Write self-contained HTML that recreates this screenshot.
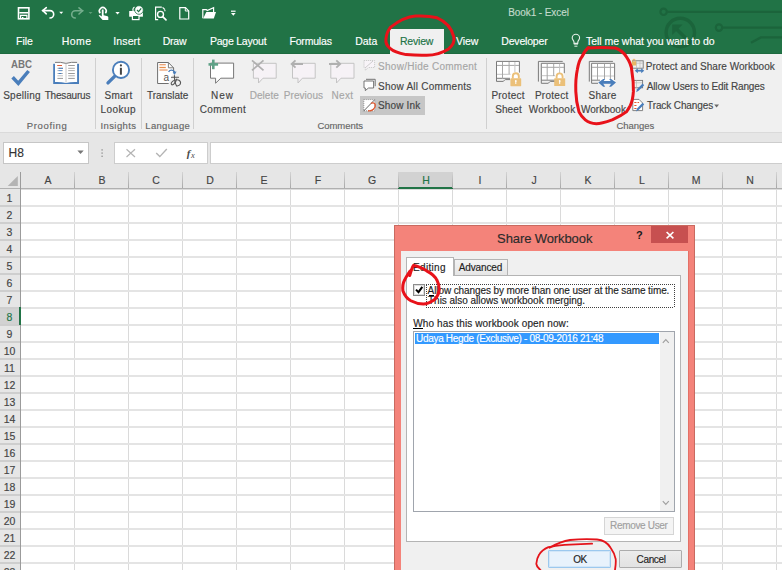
<!DOCTYPE html>
<html><head><meta charset="utf-8"><style>
html,body{margin:0;padding:0;width:782px;height:570px;overflow:hidden;background:#fff;position:relative}
*{box-sizing:border-box}
.tx{position:absolute;white-space:nowrap;font-family:"Liberation Sans",sans-serif;-webkit-text-stroke:0.15px currentColor}
.hd{font-size:10.5px;line-height:11px}
.abs{position:absolute}
svg{position:absolute;overflow:visible}
</style></head><body>

<div class="abs" style="left:0;top:0;width:782px;height:54px;background:#217346"></div>
<div class="abs" style="left:0;top:53px;width:782px;height:1px;background:#1d6a3f"></div>
<!-- circuit decoration -->
<svg style="left:0;top:0" width="782" height="54">
 <g stroke="#1b643b" fill="none" stroke-width="2.2">
  <circle cx="663.6" cy="11.8" r="3.2"/>
  <line x1="666.8" y1="11.8" x2="782" y2="11.8"/>
  <circle cx="719" cy="27.6" r="3.2"/>
  <line x1="722.2" y1="27.6" x2="782" y2="27.6"/>
  <circle cx="680.3" cy="32.5" r="14.2" stroke-width="3.4"/>
  <path d="M751 42.7 L760.8 37.4 L782 37.4" stroke-width="2.4"/>
  <path d="M676 28.5 L686.5 39" stroke-width="3.6"/>
  <path d="M672.2 24.6 L672.2 35 L682.6 24.6 Z" fill="#1b643b" stroke="none"/>
 </g>
</svg>
<!-- QAT -->
<svg style="left:0;top:0" width="250" height="26">
 <rect x="18.5" y="7.8" width="10.4" height="11" fill="none" stroke="#fff" stroke-width="1.6"/>
 <rect x="19.3" y="12" width="8.8" height="1.5" fill="#fff"/>
 <path d="M20.6 19 V15.4 H26.9 V19" fill="none" stroke="#fff" stroke-width="1.2"/>
 <rect x="22" y="17" width="1.4" height="1.6" fill="#fff"/>
 <g fill="none" stroke="#fff" stroke-width="1.6" stroke-linecap="round">
  <path d="M42.5 10.6 H50 A3.7 3.7 0 0 1 50 18"/>
  <path d="M46.3 7.6 L42.8 10.6 L46.3 13.8"/>
 </g>
 <path d="M59.2 11.8 H63.2 L61.2 14 Z" fill="#fff"/>
 <g fill="none" stroke="#74ad8c" stroke-width="1.6" stroke-linecap="round">
  <path d="M82.8 10.8 H75.3 A3.6 3.6 0 0 0 75.3 18"/>
  <path d="M79 7.8 L82.5 10.8 L79 14"/>
 </g>
 <path d="M88.6 12 H92.5 L90.55 14 Z" fill="#5f9d78"/>
 <path d="M100.2 13.2 A3.4 3.4 0 1 1 105.4 13.2" fill="none" stroke="#fff" stroke-width="1.6"/>
 <path d="M101.8 9.4 H103.6 V15.2 L107.6 16.2 L108.3 17 V19.9 H102.6 L98.6 15.6 L99.6 14.9 L101.8 16.4 Z" fill="#fff"/>
 <path d="M115.4 11.9 H119.7 L117.55 14.4 Z" fill="#fff"/>
 <!-- quick print -->
 <path d="M129.2 11 h13.7 v5.7 h-13.7 z" fill="#fff"/>
 <rect x="132.4" y="15.4" width="6.6" height="4.2" fill="#217346" stroke="#fff" stroke-width="1.2"/>
 <path d="M134 12 A3 3 0 0 1 134.5 7" fill="none" stroke="#fff" stroke-width="1.2"/>
 <circle cx="139" cy="10" r="4.3" fill="#fff" stroke="#217346" stroke-width="0.8"/>
 <path d="M137 10 L138.6 11.6 L141.2 8.3" fill="none" stroke="#217346" stroke-width="1.2"/>
 <!-- print preview -->
 <path d="M158.2 19.6 H155.6 V7.1 H161.8" fill="none" stroke="#fff" stroke-width="1.2"/>
 <path d="M162.6 7.3 L164.8 9.5" fill="none" stroke="#fff" stroke-width="1.1"/>
 <path d="M164.9 9.8 V11.2" fill="none" stroke="#fff" stroke-width="1.1"/>
 <circle cx="160.5" cy="14.4" r="3" fill="none" stroke="#fff" stroke-width="1.4"/>
 <path d="M162.7 16.6 L166 19.8" stroke="#fff" stroke-width="1.7" stroke-linecap="round"/>
 <!-- new -->
 <path d="M179.8 7.7 H185.5 L188.7 10.9 V19 H179.8 Z" fill="none" stroke="#fff" stroke-width="1.2"/>
 <path d="M185.3 7.7 V11 H188.7" fill="none" stroke="#fff" stroke-width="1"/>
 <!-- open -->
 <path d="M202.8 18.3 V9.6 H206.3 L207.2 10.5 L213.6 7.6 V12" fill="none" stroke="#fff" stroke-width="1.2"/>
 <path d="M203.2 18.6 L206.3 12 H216 L213.8 18.6 Z" fill="#fff"/>
 <!-- customize -->
 <rect x="231" y="10.6" width="4.6" height="1.2" fill="#fff"/>
 <path d="M231 13 H235.6 L233.3 15.8 Z" fill="#fff"/>
</svg>
<!-- review tab -->
<div class="abs" style="left:390px;top:29px;width:54px;height:26px;background:#f0f0f0"></div>
<!-- lightbulb -->
<svg style="left:0;top:0" width="782" height="54">
 <path d="M574 43.2 V42.2 C574 40.6 572.2 39.6 572.2 38 A3.7 3.7 0 0 1 579.6 38 C579.6 39.6 577.8 40.6 577.8 42.2 V43.2 Z" fill="none" stroke="#e6f0ea" stroke-width="1.1"/>
 <rect x="573.8" y="43" width="4.2" height="1.6" fill="#e6f0ea"/>
 <line x1="574.4" y1="46.2" x2="577.4" y2="46.2" stroke="#e6f0ea" stroke-width="1"/>
</svg>

<div class="abs" style="left:0;top:54px;width:782px;height:78px;background:#f0f0f0"></div>
<div class="abs" style="left:390px;top:54px;width:54px;height:1px;background:#f0f0f0"></div>
<!-- separators -->
<div class="abs" style="left:95px;top:58px;width:1px;height:71px;background:#d0d0d0"></div>
<div class="abs" style="left:141px;top:58px;width:1px;height:71px;background:#d0d0d0"></div>
<div class="abs" style="left:193px;top:58px;width:1px;height:71px;background:#d0d0d0"></div>
<div class="abs" style="left:486px;top:58px;width:1px;height:71px;background:#d0d0d0"></div>
<!-- show ink highlight -->
<div class="abs" style="left:360px;top:96px;width:65px;height:19px;background:#c6c6c6"></div>
<svg style="left:0;top:0" width="782" height="134">
 <!-- ABC -->
 <text x="11" y="67.9" font-family="Liberation Sans" font-weight="bold" font-size="10" fill="#777" textLength="21" lengthAdjust="spacingAndGlyphs">ABC</text>
 <path d="M12.6 77.3 L18.3 83.4 L28.6 71" fill="none" stroke="#4a7ebb" stroke-width="3.5"/>
 <!-- thesaurus -->
 <rect x="53.2" y="63.8" width="25.8" height="20.2" fill="#4a7ebb"/>
 <path d="M55 62.2 Q60.5 61.8 66 63.4 Q71.5 61.8 77.1 62.2 V82 Q71.5 81.6 66 83 Q60.5 81.6 55 82 Z" fill="#fff"/>
 <path d="M55 62.4 Q60.5 61.8 66 63.4 Q71.5 61.8 77.1 62.4" fill="none" stroke="#6a6a6a" stroke-width="0.9"/>
 <line x1="66" y1="63.4" x2="66" y2="82.6" stroke="#c8c8c8" stroke-width="1"/>
 <g stroke-width="1">
  <line x1="57.2" y1="65.5" x2="62" y2="65.5" stroke="#e0603a"/>
  <line x1="57.4" y1="68.3" x2="63" y2="68.3" stroke="#bbb"/>
  <line x1="58.6" y1="68.3" x2="63" y2="68.3" stroke="#4a7ebb"/>
  <line x1="57.4" y1="70.6" x2="63" y2="70.6" stroke="#bbb"/>
  <line x1="58.6" y1="70.6" x2="62" y2="70.6" stroke="#6b9bd2"/>
  <line x1="57.4" y1="73.5" x2="63" y2="73.5" stroke="#bbb"/>
  <line x1="58.6" y1="73.5" x2="61.5" y2="73.5" stroke="#4a7ebb"/>
  <line x1="57.4" y1="75.8" x2="63" y2="75.8" stroke="#c4c4c4"/>
  <line x1="57.4" y1="78.4" x2="63" y2="78.4" stroke="#9a9a9a"/>
  <line x1="68.2" y1="65.5" x2="74.8" y2="65.5" stroke="#9a9a9a"/>
  <line x1="68.2" y1="68.3" x2="74.8" y2="68.3" stroke="#a8a8a8"/>
  <line x1="68.2" y1="70.6" x2="74.8" y2="70.6" stroke="#b0b0b0"/>
  <line x1="68.2" y1="73.5" x2="74.8" y2="73.5" stroke="#9a9a9a"/>
  <line x1="68.2" y1="75.8" x2="74.8" y2="75.8" stroke="#b0b0b0"/>
  <line x1="68.2" y1="78.4" x2="74.8" y2="78.4" stroke="#9a9a9a"/>
 </g>
 <!-- smart lookup -->
 <line x1="108" y1="82.9" x2="114.6" y2="76.4" stroke="#4a7ebb" stroke-width="3.4" stroke-linecap="round"/>
 <circle cx="121" cy="69.9" r="8.1" fill="#fff" stroke="#4a7ebb" stroke-width="1.9"/>
 <circle cx="120.9" cy="65.4" r="1.1" fill="#444"/>
 <rect x="119.9" y="67.8" width="2" height="6.9" fill="#444"/>
 <!-- translate -->
 <path d="M168.7 83.5 H157.6 V62.5 H168.4 L173.6 67.9 V72" fill="#fff" stroke="#6f6f6f" stroke-width="1"/>
 <path d="M168.4 62.5 V67.8 H173.6" fill="none" stroke="#6f6f6f" stroke-width="0.9"/>
 <g stroke="#e8904c" stroke-width="1.3">
  <line x1="159.4" y1="64.7" x2="165.8" y2="64.7" stroke="#eba070"/>
  <line x1="159.4" y1="67.5" x2="165.8" y2="67.5"/>
  <line x1="159.4" y1="70" x2="167.6" y2="70" stroke="#eba070"/>
 </g>
 <path d="M168.6 71.8 C170 69.6 173.4 69.4 175 72.4" fill="none" stroke="#4a7ebb" stroke-width="1.4"/>
 <path d="M172.6 72.2 L176.6 71.6 L174.6 75 Z" fill="#4a7ebb"/>
 <text x="163.6" y="81.3" font-family="Liberation Sans" font-size="10" fill="#555" textLength="5.6" lengthAdjust="spacingAndGlyphs">a</text>
 <g fill="none" stroke="#555" stroke-width="1.1" stroke-linecap="round">
  <path d="M171.5 77.2 H178.5"/>
  <path d="M174.4 75.6 C174.4 79 174.8 83 176.6 86"/>
  <path d="M176.8 79 C175.4 83 172.6 86 171.4 84.4 C170.2 82.6 173.6 79.6 177.2 79.8 C180.2 80 181.2 82.4 180.2 84.2 C179.6 85.2 178.4 85.8 177.2 86"/>
 </g>
 <!-- new comment -->
 <path d="M210.5 63.1 H233.6 V78.2 H220.8 L215.6 83.2 V78.2 H210.5 Z" fill="#fff" stroke="#777" stroke-width="1" stroke-linejoin="round"/>
 <rect x="212" y="59.6" width="2.6" height="9.6" fill="#5fa187"/>
 <rect x="208.5" y="63.1" width="9.6" height="2.6" fill="#5fa187"/>
 <!-- delete -->
 <path d="M253.4 63.3 H276.2 V78.2 H263 L258.5 83 V78.2 H253.4 Z" fill="#f6f2f6" stroke="#c4c4c4" stroke-width="1" stroke-linejoin="round"/>
 <path d="M252 60.4 L263.5 70.4 M263.5 60.4 L252 70.4" stroke="#b0b0b0" stroke-width="1.8"/>
 <!-- previous -->
 <path d="M292.5 63.3 H315.2 V78.2 H302.4 L298 83 V78.2 H292.5 Z" fill="#f6f2f6" stroke="#c4c4c4" stroke-width="1" stroke-linejoin="round"/>
 <path d="M303 64 H291.8 M295.5 60.3 L291.6 64 L295.5 67.7" fill="none" stroke="#b0b0b0" stroke-width="1.8"/>
 <!-- next -->
 <path d="M330.8 63.3 H354 V78.2 H341 L336.5 83 V78.2 H330.8 Z" fill="#f6f2f6" stroke="#c4c4c4" stroke-width="1" stroke-linejoin="round"/>
 <path d="M329 64 H340 M336.3 60.3 L340.2 64 L336.3 67.7" fill="none" stroke="#b0b0b0" stroke-width="1.8"/>
 <!-- show/hide -->
 <path d="M364 60.5 H374.6 V67.5 H368.5 L365.3 70.3 V67.5 H364 Z" fill="#f8f4f8" stroke="#c8c8c8" stroke-width="0.9" stroke-dasharray="1.2 0.8"/>
 <path d="M365 68 L373 61" stroke="#c8c8c8" stroke-width="0.9"/>
 <!-- show all -->
 <path d="M366 79.3 H375.2 V86.2" fill="none" stroke="#666" stroke-width="0.9"/>
 <path d="M364 81 H373.6 V88 H368.5 L365.3 90.6 V88 H364 Z" fill="#fff" stroke="#666" stroke-width="0.9"/>
 <!-- show ink -->
 <path d="M363.8 99.6 H374.8 V110.8 H363.8 Z" fill="#fff" stroke="#888" stroke-width="0.8" stroke-dasharray="1 1"/>
 <path d="M363.5 111.2 L374.6 99.8" stroke="#555" stroke-width="0.9"/>
 <path d="M368 110.8 C372 111.5 376 108 375.2 104.6 C374.6 102.5 372 102.5 371 103.5" fill="none" stroke="#e0592f" stroke-width="1.4"/>
 <!-- protect sheet -->
 <path d="M496.5 61.4 H519.4 V79 H496.5 Z" fill="#fff"/>
 <g fill="none" stroke="#7a7a7a" stroke-width="1">
  <path d="M519.4 72.6 V61.4 H496.5 V81.4 H503 C504 81.4 504.5 79.6 505.5 79.6 H510"/>
  <line x1="496.5" y1="78.3" x2="510" y2="78.3"/>
 </g>
 <g stroke="#a6a6a6" stroke-width="1">
  <line x1="497" y1="65.4" x2="519" y2="65.4"/>
  <line x1="497" y1="74.3" x2="510.5" y2="74.3" stroke="#c4c4c4"/>
  <line x1="502.5" y1="62" x2="502.5" y2="79"/>
  <line x1="509.1" y1="62" x2="509.1" y2="74"/>
  <line x1="514.9" y1="62" x2="514.9" y2="72" stroke="#c4c4c4"/>
 </g>
 <path d="M512.8 78.6 V76.3 A3 3 0 0 1 518.8 76.3 V78.6" fill="none" stroke="#ebc079" stroke-width="1.9"/>
 <rect x="510.4" y="78.3" width="10.8" height="7.9" rx="0.6" fill="#ebc079"/>
 <circle cx="515.8" cy="81" r="0.9" fill="#fff"/>
 <rect x="515.3" y="81" width="1" height="3" fill="#fff"/>
 <!-- protect workbook -->
 <path d="M538.4 81.6 V61.4 H562.7" fill="none" stroke="#7a7a7a" stroke-width="1"/>
 <path d="M541.3 63.3 H564.3 V81 H541.3 Z" fill="#fff"/>
 <g fill="none" stroke="#7a7a7a" stroke-width="1">
  <path d="M564.3 73.2 V63.3 H541.3 V83.3 H548 C549 83.3 549.5 81.4 550.5 81.4 H555"/>
  <line x1="541.3" y1="80.2" x2="555" y2="80.2"/>
 </g>
 <g stroke="#a6a6a6" stroke-width="1">
  <line x1="541.8" y1="67.3" x2="564" y2="67.3"/>
  <line x1="541.8" y1="75.7" x2="555" y2="75.7" stroke="#c4c4c4"/>
  <line x1="547.2" y1="63.8" x2="547.2" y2="80"/>
  <line x1="553.7" y1="63.8" x2="553.7" y2="76"/>
  <line x1="559.6" y1="63.8" x2="559.6" y2="73" stroke="#c4c4c4"/>
 </g>
 <path d="M556.6 78.5 V76.4 A3 3 0 0 1 562.6 76.4 V78.5" fill="none" stroke="#ebc079" stroke-width="1.9"/>
 <rect x="554.2" y="78.2" width="11" height="7.9" rx="0.6" fill="#ebc079"/>
 <circle cx="559.7" cy="80.9" r="0.9" fill="#fff"/>
 <rect x="559.2" y="80.9" width="1" height="3" fill="#fff"/>
 <!-- share workbook -->
 <path d="M589.3 81.6 V61.4 H612.9" fill="none" stroke="#7a7a7a" stroke-width="1"/>
 <path d="M591.6 63.3 H614.6 V81 H591.6 Z" fill="#fff"/>
 <g fill="none" stroke="#7a7a7a" stroke-width="1">
  <path d="M614.6 80 V63.3 H591.6 V83.3 H598"/>
  <line x1="591.6" y1="80.2" x2="600" y2="80.2"/>
 </g>
 <g stroke="#a6a6a6" stroke-width="1">
  <line x1="592" y1="67.3" x2="614" y2="67.3"/>
  <line x1="592" y1="76" x2="614" y2="76" stroke="#c8c8c8"/>
  <line x1="597.5" y1="63.8" x2="597.5" y2="80"/>
  <line x1="604.5" y1="63.8" x2="604.5" y2="79"/>
  <line x1="610.4" y1="63.8" x2="610.4" y2="79"/>
 </g>
 <path d="M601 82.4 H613.3" stroke="#4a7ebb" stroke-width="2.8"/>
 <path d="M598.3 82.4 L603.2 78.9 H605.2 L602.4 82.4 L605.2 86.7 H603.2 Z" fill="#4a7ebb"/>
 <path d="M616 82.4 L611.1 78.9 H609.1 L611.9 82.4 L609.1 86.7 H611.1 Z" fill="#4a7ebb"/>
 <!-- small icons changes -->
 <g fill="none" stroke="#777" stroke-width="0.9">
  <rect x="632.6" y="60.8" width="10.6" height="7.4"/>
 </g>
 <g stroke="#bbb" stroke-width="0.7"><line x1="633" y1="63.2" x2="643" y2="63.2"/><line x1="636.5" y1="61" x2="636.5" y2="68"/><line x1="640" y1="61" x2="640" y2="68"/></g>
 <rect x="631.8" y="61.5" width="4.4" height="4" fill="#e8b765"/>
 <path d="M632.8 61.8 V60.4 A1.2 1.2 0 0 1 635.2 60.4 V61.8" fill="none" stroke="#e8b765" stroke-width="1"/>
 <path d="M637 70.7 H642" stroke="#4a7ebb" stroke-width="1.8"/>
 <path d="M634.8 70.7 L637.8 68.2 V73.2 Z M644.2 70.7 L641.2 68.2 V73.2 Z" fill="#4a7ebb"/>
 <g fill="none" stroke="#777" stroke-width="0.9"><rect x="632.6" y="80.4" width="10" height="7.4"/></g>
 <g stroke="#bbb" stroke-width="0.7"><line x1="633" y1="82.8" x2="642" y2="82.8"/><line x1="636.5" y1="80.6" x2="636.5" y2="87.6"/></g>
 <path d="M636.2 92.2 L637 89.2 L642.6 83.6 L644.2 85.2 L638.6 90.8 Z" fill="#4a7ebb"/>
 <path d="M632.8 99.4 H639 L642.6 103 V110.6 H632.8 Z" fill="#fff" stroke="#777" stroke-width="0.9"/>
 <g fill="#e0592f"><rect x="634.3" y="102" width="2.2" height="1"/><rect x="634.3" y="105" width="2.2" height="1"/><rect x="634.3" y="108" width="2.2" height="1"/><rect x="637.5" y="102" width="1.6" height="1"/></g>
 <path d="M636.2 111.4 L637 108.4 L642.6 102.8 L644.2 104.4 L638.6 110 Z" fill="#4a7ebb"/>
 <path d="M714.2 104.4 H719 L716.6 107.4 Z" fill="#6a6a6a"/>
</svg>

<div class="abs" style="left:0;top:132px;width:782px;height:40px;background:#e6e6e6"></div>
<div class="abs" style="left:0;top:132px;width:782px;height:1px;background:#dadada"></div>
<div class="abs" style="left:3px;top:142px;width:86px;height:22px;background:#fff;border:1px solid #c6c6c6"></div>
<svg style="left:0;top:0" width="782" height="172">
 <path d="M77.4 150.4 H83.7 L80.55 154 Z" fill="#777"/>
 <rect x="101.4" y="149.2" width="1.4" height="1.4" fill="#9a9a9a"/>
 <rect x="101.4" y="152.4" width="1.4" height="1.4" fill="#9a9a9a"/>
 <rect x="101.4" y="155.6" width="1.4" height="1.4" fill="#9a9a9a"/>
</svg>
<div class="abs" style="left:114px;top:142px;width:94px;height:22px;background:#fff;border:1px solid #cdcdcd"></div>
<div class="abs" style="left:210px;top:142px;width:580px;height:22px;background:#fff;border:1px solid #cdcdcd"></div>
<svg style="left:0;top:0" width="782" height="172">
 <path d="M126.5 149.2 L135 157 M135 149.2 L126.5 157" stroke="#b4b4b4" stroke-width="1.2"/>
 <path d="M156.2 153 L159.8 156.6 L166.8 149" fill="none" stroke="#b4b4b4" stroke-width="1.4"/>
 <text x="186.8" y="156.8" font-family="Liberation Serif" font-style="italic" font-weight="bold" font-size="11" fill="#4a4a4a">f</text>
 <text x="191" y="157.5" font-family="Liberation Serif" font-style="italic" font-size="8.5" fill="#4a4a4a">x</text>
</svg>

<div style="position:absolute;left:0;top:172px;width:782px;height:17px;background:#e6e6e6"></div>
<div style="position:absolute;left:398px;top:172px;width:54px;height:16px;background:#d2d2d2"></div>
<div style="position:absolute;left:398px;top:187px;width:55px;height:2px;background:#217346"></div>
<div style="position:absolute;left:0;top:188px;width:398px;height:1px;background:#b0b0b0"></div>
<div style="position:absolute;left:453px;top:188px;width:329px;height:1px;background:#b0b0b0"></div>
<div style="position:absolute;left:0;top:189px;width:20px;height:381px;background:#e6e6e6"></div>
<div style="position:absolute;left:0;top:308px;width:19px;height:16px;background:#d2d2d2"></div>
<div style="position:absolute;left:21px;top:189px;width:761px;height:381px;background:#fff"></div>
<div style="position:absolute;left:21px;top:189px;width:761px;height:1px;background:#dcdcdc"></div>
<div style="position:absolute;left:20px;top:172px;width:1px;height:398px;background:#9b9b9b"></div>
<div style="position:absolute;left:74px;top:189px;width:1px;height:381px;background:#dadada"></div>
<div style="position:absolute;left:74px;top:172px;width:1px;height:16px;background:linear-gradient(#d4d4d4,#a8a8a8)"></div>
<div style="position:absolute;left:128px;top:189px;width:1px;height:381px;background:#dadada"></div>
<div style="position:absolute;left:128px;top:172px;width:1px;height:16px;background:linear-gradient(#d4d4d4,#a8a8a8)"></div>
<div style="position:absolute;left:182px;top:189px;width:1px;height:381px;background:#dadada"></div>
<div style="position:absolute;left:182px;top:172px;width:1px;height:16px;background:linear-gradient(#d4d4d4,#a8a8a8)"></div>
<div style="position:absolute;left:236px;top:189px;width:1px;height:381px;background:#dadada"></div>
<div style="position:absolute;left:236px;top:172px;width:1px;height:16px;background:linear-gradient(#d4d4d4,#a8a8a8)"></div>
<div style="position:absolute;left:290px;top:189px;width:1px;height:381px;background:#dadada"></div>
<div style="position:absolute;left:290px;top:172px;width:1px;height:16px;background:linear-gradient(#d4d4d4,#a8a8a8)"></div>
<div style="position:absolute;left:344px;top:189px;width:1px;height:381px;background:#dadada"></div>
<div style="position:absolute;left:344px;top:172px;width:1px;height:16px;background:linear-gradient(#d4d4d4,#a8a8a8)"></div>
<div style="position:absolute;left:398px;top:189px;width:1px;height:381px;background:#dadada"></div>
<div style="position:absolute;left:398px;top:172px;width:1px;height:16px;background:linear-gradient(#d4d4d4,#a8a8a8)"></div>
<div style="position:absolute;left:452px;top:189px;width:1px;height:381px;background:#dadada"></div>
<div style="position:absolute;left:452px;top:172px;width:1px;height:16px;background:linear-gradient(#d4d4d4,#a8a8a8)"></div>
<div style="position:absolute;left:506px;top:189px;width:1px;height:381px;background:#dadada"></div>
<div style="position:absolute;left:506px;top:172px;width:1px;height:16px;background:linear-gradient(#d4d4d4,#a8a8a8)"></div>
<div style="position:absolute;left:560px;top:189px;width:1px;height:381px;background:#dadada"></div>
<div style="position:absolute;left:560px;top:172px;width:1px;height:16px;background:linear-gradient(#d4d4d4,#a8a8a8)"></div>
<div style="position:absolute;left:614px;top:189px;width:1px;height:381px;background:#dadada"></div>
<div style="position:absolute;left:614px;top:172px;width:1px;height:16px;background:linear-gradient(#d4d4d4,#a8a8a8)"></div>
<div style="position:absolute;left:668px;top:189px;width:1px;height:381px;background:#dadada"></div>
<div style="position:absolute;left:668px;top:172px;width:1px;height:16px;background:linear-gradient(#d4d4d4,#a8a8a8)"></div>
<div style="position:absolute;left:722px;top:189px;width:1px;height:381px;background:#dadada"></div>
<div style="position:absolute;left:722px;top:172px;width:1px;height:16px;background:linear-gradient(#d4d4d4,#a8a8a8)"></div>
<div style="position:absolute;left:776px;top:189px;width:1px;height:381px;background:#dadada"></div>
<div style="position:absolute;left:776px;top:172px;width:1px;height:16px;background:linear-gradient(#d4d4d4,#a8a8a8)"></div>
<div style="position:absolute;left:21px;top:205px;width:761px;height:2px;background:#e4e4e4"></div>
<div style="position:absolute;left:0;top:205px;width:20px;height:2px;background:#cecece"></div>
<div style="position:absolute;left:21px;top:222px;width:761px;height:2px;background:#e4e4e4"></div>
<div style="position:absolute;left:0;top:222px;width:20px;height:2px;background:#cecece"></div>
<div style="position:absolute;left:21px;top:239px;width:761px;height:2px;background:#e4e4e4"></div>
<div style="position:absolute;left:0;top:239px;width:20px;height:2px;background:#cecece"></div>
<div style="position:absolute;left:21px;top:256px;width:761px;height:2px;background:#e4e4e4"></div>
<div style="position:absolute;left:0;top:256px;width:20px;height:2px;background:#cecece"></div>
<div style="position:absolute;left:21px;top:273px;width:761px;height:2px;background:#e4e4e4"></div>
<div style="position:absolute;left:0;top:273px;width:20px;height:2px;background:#cecece"></div>
<div style="position:absolute;left:21px;top:290px;width:761px;height:2px;background:#e4e4e4"></div>
<div style="position:absolute;left:0;top:290px;width:20px;height:2px;background:#cecece"></div>
<div style="position:absolute;left:21px;top:307px;width:761px;height:2px;background:#e4e4e4"></div>
<div style="position:absolute;left:0;top:307px;width:20px;height:2px;background:#cecece"></div>
<div style="position:absolute;left:21px;top:324px;width:761px;height:2px;background:#e4e4e4"></div>
<div style="position:absolute;left:0;top:324px;width:20px;height:2px;background:#cecece"></div>
<div style="position:absolute;left:21px;top:341px;width:761px;height:2px;background:#e4e4e4"></div>
<div style="position:absolute;left:0;top:341px;width:20px;height:2px;background:#cecece"></div>
<div style="position:absolute;left:21px;top:358px;width:761px;height:2px;background:#e4e4e4"></div>
<div style="position:absolute;left:0;top:358px;width:20px;height:2px;background:#cecece"></div>
<div style="position:absolute;left:21px;top:375px;width:761px;height:2px;background:#e4e4e4"></div>
<div style="position:absolute;left:0;top:375px;width:20px;height:2px;background:#cecece"></div>
<div style="position:absolute;left:21px;top:392px;width:761px;height:2px;background:#e4e4e4"></div>
<div style="position:absolute;left:0;top:392px;width:20px;height:2px;background:#cecece"></div>
<div style="position:absolute;left:21px;top:409px;width:761px;height:2px;background:#e4e4e4"></div>
<div style="position:absolute;left:0;top:409px;width:20px;height:2px;background:#cecece"></div>
<div style="position:absolute;left:21px;top:426px;width:761px;height:2px;background:#e4e4e4"></div>
<div style="position:absolute;left:0;top:426px;width:20px;height:2px;background:#cecece"></div>
<div style="position:absolute;left:21px;top:443px;width:761px;height:2px;background:#e4e4e4"></div>
<div style="position:absolute;left:0;top:443px;width:20px;height:2px;background:#cecece"></div>
<div style="position:absolute;left:21px;top:460px;width:761px;height:2px;background:#e4e4e4"></div>
<div style="position:absolute;left:0;top:460px;width:20px;height:2px;background:#cecece"></div>
<div style="position:absolute;left:21px;top:477px;width:761px;height:2px;background:#e4e4e4"></div>
<div style="position:absolute;left:0;top:477px;width:20px;height:2px;background:#cecece"></div>
<div style="position:absolute;left:21px;top:494px;width:761px;height:2px;background:#e4e4e4"></div>
<div style="position:absolute;left:0;top:494px;width:20px;height:2px;background:#cecece"></div>
<div style="position:absolute;left:21px;top:511px;width:761px;height:2px;background:#e4e4e4"></div>
<div style="position:absolute;left:0;top:511px;width:20px;height:2px;background:#cecece"></div>
<div style="position:absolute;left:21px;top:528px;width:761px;height:2px;background:#e4e4e4"></div>
<div style="position:absolute;left:0;top:528px;width:20px;height:2px;background:#cecece"></div>
<div style="position:absolute;left:21px;top:545px;width:761px;height:2px;background:#e4e4e4"></div>
<div style="position:absolute;left:0;top:545px;width:20px;height:2px;background:#cecece"></div>
<div style="position:absolute;left:21px;top:562px;width:761px;height:2px;background:#e4e4e4"></div>
<div style="position:absolute;left:0;top:562px;width:20px;height:2px;background:#cecece"></div>
<div style="position:absolute;left:21px;top:579px;width:761px;height:2px;background:#e4e4e4"></div>
<div style="position:absolute;left:0;top:579px;width:20px;height:2px;background:#cecece"></div>
<div style="position:absolute;left:19px;top:307px;width:2px;height:18px;background:#217346"></div>
<svg style="position:absolute;left:0;top:172px" width="20" height="17"><path d="M17.8 4 L17.8 14 L7.7 14 Z" fill="#b4b4b4"/></svg>
<div class="tx hd" style="left:21px;top:175px;width:54px;text-align:center;color:#444">A</div>
<div class="tx hd" style="left:75px;top:175px;width:54px;text-align:center;color:#444">B</div>
<div class="tx hd" style="left:129px;top:175px;width:54px;text-align:center;color:#444">C</div>
<div class="tx hd" style="left:183px;top:175px;width:54px;text-align:center;color:#444">D</div>
<div class="tx hd" style="left:237px;top:175px;width:54px;text-align:center;color:#444">E</div>
<div class="tx hd" style="left:291px;top:175px;width:54px;text-align:center;color:#444">F</div>
<div class="tx hd" style="left:345px;top:175px;width:54px;text-align:center;color:#444">G</div>
<div class="tx hd" style="left:399px;top:175px;width:54px;text-align:center;color:#217346">H</div>
<div class="tx hd" style="left:453px;top:175px;width:54px;text-align:center;color:#444">I</div>
<div class="tx hd" style="left:507px;top:175px;width:54px;text-align:center;color:#444">J</div>
<div class="tx hd" style="left:561px;top:175px;width:54px;text-align:center;color:#444">K</div>
<div class="tx hd" style="left:615px;top:175px;width:54px;text-align:center;color:#444">L</div>
<div class="tx hd" style="left:669px;top:175px;width:54px;text-align:center;color:#444">M</div>
<div class="tx hd" style="left:723px;top:175px;width:54px;text-align:center;color:#444">N</div>
<div class="tx hd" style="left:0px;top:193px;width:19px;text-align:center;color:#444">1</div>
<div class="tx hd" style="left:0px;top:210px;width:19px;text-align:center;color:#444">2</div>
<div class="tx hd" style="left:0px;top:227px;width:19px;text-align:center;color:#444">3</div>
<div class="tx hd" style="left:0px;top:244px;width:19px;text-align:center;color:#444">4</div>
<div class="tx hd" style="left:0px;top:261px;width:19px;text-align:center;color:#444">5</div>
<div class="tx hd" style="left:0px;top:278px;width:19px;text-align:center;color:#444">6</div>
<div class="tx hd" style="left:0px;top:295px;width:19px;text-align:center;color:#444">7</div>
<div class="tx hd" style="left:0px;top:312px;width:19px;text-align:center;color:#217346">8</div>
<div class="tx hd" style="left:0px;top:329px;width:19px;text-align:center;color:#444">9</div>
<div class="tx hd" style="left:0px;top:346px;width:19px;text-align:center;color:#444">10</div>
<div class="tx hd" style="left:0px;top:363px;width:19px;text-align:center;color:#444">11</div>
<div class="tx hd" style="left:0px;top:380px;width:19px;text-align:center;color:#444">12</div>
<div class="tx hd" style="left:0px;top:397px;width:19px;text-align:center;color:#444">13</div>
<div class="tx hd" style="left:0px;top:414px;width:19px;text-align:center;color:#444">14</div>
<div class="tx hd" style="left:0px;top:431px;width:19px;text-align:center;color:#444">15</div>
<div class="tx hd" style="left:0px;top:448px;width:19px;text-align:center;color:#444">16</div>
<div class="tx hd" style="left:0px;top:465px;width:19px;text-align:center;color:#444">17</div>
<div class="tx hd" style="left:0px;top:482px;width:19px;text-align:center;color:#444">18</div>
<div class="tx hd" style="left:0px;top:499px;width:19px;text-align:center;color:#444">19</div>
<div class="tx hd" style="left:0px;top:516px;width:19px;text-align:center;color:#444">20</div>
<div class="tx hd" style="left:0px;top:533px;width:19px;text-align:center;color:#444">21</div>
<div class="tx hd" style="left:0px;top:550px;width:19px;text-align:center;color:#444">22</div>
<div class="tx hd" style="left:0px;top:567px;width:19px;text-align:center;color:#444">23</div>
<div class="abs" style="left:394px;top:225px;width:301px;height:345px;background:#f4837a;border:1px solid #c96a60;border-bottom:none"></div>
<div class="abs" style="left:651px;top:226px;width:37px;height:17px;background:#c75050"></div>
<svg style="left:0;top:0" width="782" height="570">
 <path d="M666.6 232 L673.4 238.4 M673.4 232 L666.6 238.4" stroke="#fff" stroke-width="1.6"/>
 <text x="636" y="238.6" font-family="Liberation Sans" font-weight="bold" font-size="11" fill="#1a1a1a">?</text>
</svg>
<div class="abs" style="left:401px;top:251px;width:288px;height:319px;background:#f0f0f0;border-right:1px solid #e47066"></div>
<!-- tab panel -->
<div class="abs" style="left:406px;top:275px;width:275px;height:267px;background:#fff;border:1px solid #b4b4b4"></div>
<div class="abs" style="left:454px;top:259px;width:54px;height:17px;background:linear-gradient(#f3f3f3,#e6e6e6);border:1px solid #b4b4b4"></div>
<div class="abs" style="left:406px;top:257px;width:48px;height:19px;background:#fff;border:1px solid #b4b4b4;border-bottom:none"></div>
<!-- checkbox -->
<div class="abs" style="left:413px;top:284px;width:12px;height:12px;background:#fff;border:1px solid #8c8c8c;box-shadow:inset 0 0 0 1px #dedede"></div>
<svg style="left:0;top:0" width="782" height="570">
 <path d="M416 289.6 L418.5 292.2 L422.3 286.8" fill="none" stroke="#000" stroke-width="2"/>
 <rect x="426" y="284" width="248" height="23" fill="none" stroke="#404040" stroke-width="1" stroke-dasharray="1 1" shape-rendering="crispEdges"/>
 <line x1="428.5" y1="295.5" x2="434" y2="295.5" stroke="#000" stroke-width="1" shape-rendering="crispEdges"/>
 <line x1="413" y1="328.5" x2="422.5" y2="328.5" stroke="#000" stroke-width="1" shape-rendering="crispEdges"/>
</svg>
<!-- listbox -->
<div class="abs" style="left:413px;top:331px;width:262px;height:181px;background:#fff;border:1px solid #a0a5ad"></div>
<div class="abs" style="left:415px;top:333px;width:244px;height:11px;background:#3399ff"></div>
<div class="abs" style="left:660px;top:332px;width:14px;height:179px;background:#f0f0f0"></div>
<svg style="left:0;top:0" width="782" height="570">
 <path d="M662.8 342.8 L665.8 339.6 L668.8 342.8" fill="none" stroke="#a0a0a0" stroke-width="1.2"/>
 <path d="M662.8 501.2 L665.8 504.4 L668.8 501.2" fill="none" stroke="#a0a0a0" stroke-width="1.2"/>
</svg>
<!-- buttons -->
<div class="abs" style="left:604px;top:517px;width:70px;height:18px;background:#f4f4f4;border:1px solid #d5d5d5"></div>
<div class="abs" style="left:548px;top:550px;width:63px;height:18px;background:#e8f2fc;border:1px solid #9cc8ee;border-radius:1px;box-shadow:inset 0 0 0 1px #d2e6f8"></div>
<div class="abs" style="left:619px;top:550px;width:63px;height:18px;background:linear-gradient(#ececec,#e2e2e2);border:1px solid #acacac;border-radius:1px"></div>

<div class="tx" style="left:508.20px;top:8.00px;font-size:10px;line-height:10px;color:#c2dacb;font-weight:400;letter-spacing:-0.083px;">Book1 - Excel</div>
<div class="tx" style="left:16.00px;top:35.60px;font-size:10.5px;line-height:10.5px;color:#ffffff;font-weight:400;letter-spacing:0.000px;">File</div>
<div class="tx" style="left:61.70px;top:35.60px;font-size:10.5px;line-height:10.5px;color:#ffffff;font-weight:400;letter-spacing:0.433px;">Home</div>
<div class="tx" style="left:113.30px;top:35.60px;font-size:10.5px;line-height:10.5px;color:#ffffff;font-weight:400;letter-spacing:0.120px;">Insert</div>
<div class="tx" style="left:162.70px;top:35.60px;font-size:10.5px;line-height:10.5px;color:#ffffff;font-weight:400;letter-spacing:-0.233px;">Draw</div>
<div class="tx" style="left:209.90px;top:35.60px;font-size:10.5px;line-height:10.5px;color:#ffffff;font-weight:400;letter-spacing:-0.230px;">Page Layout</div>
<div class="tx" style="left:289.40px;top:35.60px;font-size:10.5px;line-height:10.5px;color:#ffffff;font-weight:400;letter-spacing:-0.171px;">Formulas</div>
<div class="tx" style="left:355.20px;top:35.60px;font-size:10.5px;line-height:10.5px;color:#ffffff;font-weight:400;letter-spacing:-0.033px;">Data</div>
<div class="tx" style="left:399.90px;top:35.80px;font-size:10.5px;line-height:10.5px;color:#217346;font-weight:400;letter-spacing:-0.180px;">Review</div>
<div class="tx" style="left:456.10px;top:35.60px;font-size:10.5px;line-height:10.5px;color:#ffffff;font-weight:400;letter-spacing:-0.100px;">View</div>
<div class="tx" style="left:501.30px;top:35.60px;font-size:10.5px;line-height:10.5px;color:#ffffff;font-weight:400;letter-spacing:-0.188px;">Developer</div>
<div class="tx" style="left:586.00px;top:35.60px;font-size:10.5px;line-height:10.5px;color:#ffffff;font-weight:400;letter-spacing:-0.038px;">Tell me what you want to do</div>
<div class="tx" style="left:3.20px;top:91.10px;font-size:10px;line-height:10px;color:#444444;font-weight:400;letter-spacing:0.257px;">Spelling</div>
<div class="tx" style="left:44.70px;top:91.10px;font-size:10px;line-height:10px;color:#444444;font-weight:400;letter-spacing:-0.188px;">Thesaurus</div>
<div class="tx" style="left:104.50px;top:91.10px;font-size:10px;line-height:10px;color:#444444;font-weight:400;letter-spacing:0.250px;">Smart</div>
<div class="tx" style="left:100.50px;top:104.60px;font-size:10px;line-height:10px;color:#444444;font-weight:400;letter-spacing:0.440px;">Lookup</div>
<div class="tx" style="left:147.00px;top:91.10px;font-size:10px;line-height:10px;color:#444444;font-weight:400;letter-spacing:0.000px;">Translate</div>
<div class="tx" style="left:211.00px;top:91.10px;font-size:10px;line-height:10px;color:#444444;font-weight:400;letter-spacing:0.950px;">New</div>
<div class="tx" style="left:199.70px;top:104.60px;font-size:10px;line-height:10px;color:#444444;font-weight:400;letter-spacing:0.450px;">Comment</div>
<div class="tx" style="left:249.70px;top:91.10px;font-size:10px;line-height:10px;color:#a6a6a6;font-weight:400;letter-spacing:0.060px;">Delete</div>
<div class="tx" style="left:283.80px;top:91.10px;font-size:10px;line-height:10px;color:#a6a6a6;font-weight:400;letter-spacing:0.043px;">Previous</div>
<div class="tx" style="left:331.50px;top:91.10px;font-size:10px;line-height:10px;color:#a6a6a6;font-weight:400;letter-spacing:0.333px;">Next</div>
<div class="tx" style="left:378.10px;top:62.40px;font-size:10px;line-height:10px;color:#a6a6a6;font-weight:400;letter-spacing:0.269px;">Show/Hide Comment</div>
<div class="tx" style="left:378.10px;top:81.60px;font-size:10px;line-height:10px;color:#444444;font-weight:400;letter-spacing:0.225px;">Show All Comments</div>
<div class="tx" style="left:378.00px;top:100.90px;font-size:10px;line-height:10px;color:#444444;font-weight:400;letter-spacing:0.143px;">Show Ink</div>
<div class="tx" style="left:491.40px;top:91.10px;font-size:10px;line-height:10px;color:#444444;font-weight:400;letter-spacing:0.233px;">Protect</div>
<div class="tx" style="left:495.20px;top:104.60px;font-size:10px;line-height:10px;color:#444444;font-weight:400;letter-spacing:0.100px;">Sheet</div>
<div class="tx" style="left:534.90px;top:91.10px;font-size:10px;line-height:10px;color:#444444;font-weight:400;letter-spacing:0.283px;">Protect</div>
<div class="tx" style="left:528.80px;top:104.60px;font-size:10px;line-height:10px;color:#444444;font-weight:400;letter-spacing:0.214px;">Workbook</div>
<div class="tx" style="left:588.60px;top:91.10px;font-size:10px;line-height:10px;color:#444444;font-weight:400;letter-spacing:0.250px;">Share</div>
<div class="tx" style="left:581.00px;top:104.60px;font-size:10px;line-height:10px;color:#444444;font-weight:400;letter-spacing:0.014px;">Workbook</div>
<div class="tx" style="left:645.70px;top:62.10px;font-size:10px;line-height:10px;color:#444444;font-weight:400;letter-spacing:0.036px;">Protect and Share Workbook</div>
<div class="tx" style="left:646.70px;top:81.70px;font-size:10px;line-height:10px;color:#444444;font-weight:400;letter-spacing:-0.124px;">Allow Users to Edit Ranges</div>
<div class="tx" style="left:647.10px;top:101.20px;font-size:10px;line-height:10px;color:#444444;font-weight:400;letter-spacing:-0.117px;">Track Changes</div>
<div class="tx" style="left:26.80px;top:120.60px;font-size:9.5px;line-height:9.5px;color:#666666;font-weight:400;letter-spacing:0.643px;">Proofing</div>
<div class="tx" style="left:100.50px;top:120.60px;font-size:9.5px;line-height:9.5px;color:#666666;font-weight:400;letter-spacing:0.400px;">Insights</div>
<div class="tx" style="left:145.30px;top:120.60px;font-size:9.5px;line-height:9.5px;color:#666666;font-weight:400;letter-spacing:0.314px;">Language</div>
<div class="tx" style="left:317.40px;top:120.60px;font-size:9.5px;line-height:9.5px;color:#666666;font-weight:400;letter-spacing:-0.043px;">Comments</div>
<div class="tx" style="left:616.50px;top:120.60px;font-size:9.5px;line-height:9.5px;color:#666666;font-weight:400;letter-spacing:-0.067px;">Changes</div>
<div class="tx" style="left:8.60px;top:146.70px;font-size:12px;line-height:12px;color:#333333;font-weight:400;letter-spacing:-0.100px;">H8</div>
<div class="tx" style="left:497.10px;top:231.60px;font-size:13px;line-height:13px;color:#2b2b2b;font-weight:400;letter-spacing:-0.100px;">Share Workbook</div>
<div class="tx" style="left:413.00px;top:262.80px;font-size:10px;line-height:10px;color:#1e1e1e;font-weight:400;letter-spacing:0.333px;">Editing</div>
<div class="tx" style="left:458.70px;top:262.80px;font-size:10px;line-height:10px;color:#1e1e1e;font-weight:400;letter-spacing:-0.129px;">Advanced</div>
<div class="tx" style="left:427.60px;top:285.90px;font-size:10px;line-height:10px;color:#1e1e1e;font-weight:400;letter-spacing:-0.096px;">Allow changes by more than one user at the same time.</div>
<div class="tx" style="left:428.00px;top:296.40px;font-size:10px;line-height:10px;color:#1e1e1e;font-weight:400;letter-spacing:-0.021px;">This also allows workbook merging.</div>
<div class="tx" style="left:413.30px;top:319.00px;font-size:10px;line-height:10px;color:#1e1e1e;font-weight:400;letter-spacing:0.103px;">Who has this workbook open now:</div>
<div class="tx" style="left:416.10px;top:333.70px;font-size:10px;line-height:10px;color:#ffffff;font-weight:400;letter-spacing:-0.320px;">Udaya Hegde (Exclusive) - 08-09-2016 21:48</div>
<div class="tx" style="left:610.00px;top:521.20px;font-size:10px;line-height:10px;color:#a0a0a0;font-weight:400;letter-spacing:-0.320px;">Remove User</div>
<div class="tx" style="left:573.20px;top:554.60px;font-size:10px;line-height:10px;color:#1e1e1e;font-weight:400;letter-spacing:-0.400px;">OK</div>
<div class="tx" style="left:636.60px;top:554.60px;font-size:10px;line-height:10px;color:#1e1e1e;font-weight:400;letter-spacing:-0.360px;">Cancel</div>
<svg style="left:0;top:0" width="782" height="570">
 <g fill="none" stroke="#e8121a" stroke-width="3" stroke-linecap="round" stroke-linejoin="round">
  <path d="M390 27.6 C400 20 408 16.5 415.3 16.1 C425 15.5 432 16.5 437.1 17.8 C447 22 452 29 453.8 36.8 C455 42 452 46 448.6 48.9 C442 53 434 55.2 426.8 55.2 C418 55.5 411 55 406 54.6 C398 53 393 51 390 48.3 C386 45 385.5 42 385.9 39.1 C386.5 34 388 30 391 27"/>
  <path d="M587.6 48 C596 47.5 607 47.5 615.3 48 C621 50 624 53 626.3 56.6 C630 62 631.5 66 631.8 70.8 C633 78 633.6 85 633.4 91.4 C633 98 632 102 630.3 105.6 C629 108 628 110 626.3 111.9 C621 116 616 118 612.1 119.8 C606 122 601 123.7 596.3 123.7 C591 123.5 588 122 585.3 119.8 C582 117 580 114 579 111.9 C577 105 576 98 575.8 91.4 C575.5 83 576.2 75 577.4 69.3 C578.5 63 580 59 582.1 56.6 C584 52 586 49.5 588.5 47.5"/>
  <path d="M409.7 275.5 C411 271 412 268 413.4 265.5 C418 266 422 268 426.6 270.8 C431 273 435 276 437 280.3 C438.5 283 439.2 286 439.2 289.7 C439 293 437.5 296.5 435 299.2 C431 302 427 304 423.4 304 C418 304 414 302.5 410.8 300.8 C406 298 404 294 402.9 290.8 C402.5 287 403 283 404.5 280.3 C406 277 408 274 410 271"/>
 </g>
 <g fill="none" stroke="#e4141b" stroke-width="1.8" stroke-linecap="round" stroke-linejoin="round">
  <path d="M592.1 543.6 C582 544 572 544.5 564.5 544.8 C557 545.5 552 546.3 548.4 547.1 C544 549 541 551.5 539.2 554.6 C537 558 536.5 561 536.3 563.8 C536.5 566 538 568 540.4 570"/>
  <path d="M549.6 547.7 C556 544 563 541 570 540 C580 539 590 539 597 539.5 C603 540 607 542 610.6 547.7 C613 551 615 555 615.7 559.2 C616 563 615.5 567 615 570"/>
 </g>
</svg>

</body></html>
